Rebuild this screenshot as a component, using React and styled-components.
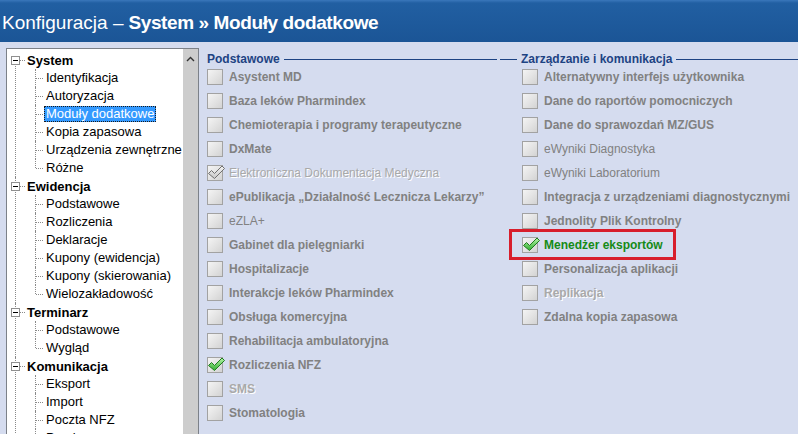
import React from 'react'
import styled, { createGlobalStyle, css } from 'styled-components'

const GlobalStyle = createGlobalStyle`
  html, body {
    margin: 0;
    padding: 0;
  }
  body {
    background: #d5dcef;
    font-family: "Liberation Sans", Arial, sans-serif;
    overflow: hidden;
  }
`;

const Window = styled.div`
  width: 798px;
  height: 434px;
  display: flex;
  flex-direction: column;
  overflow: hidden;
  background: #d5dcef;
`;

const TitleBar = styled.div`
  height: 42px;
  flex: none;
  box-sizing: border-box;
  display: flex;
  align-items: center;
  padding: 3px 0 0 2px;
  background: linear-gradient(#3a77bb 0, #215fa2 3px, #1b5596 100%);
  color: #fff;
  font-size: 19px;
  white-space: nowrap;
`;

const TitleStrong = styled.b`
  letter-spacing: -0.4px;
  margin-left: 5px;
`;

const Body = styled.div`
  flex: 1;
  min-height: 0;
  display: flex;
`;

/* ---------- tree ---------- */

const TreePanel = styled.div`
  flex: none;
  margin: 6px 0 0 6px;
  width: 193px;
  box-sizing: border-box;
  border: 1px solid #7c8189;
  border-bottom: none;
  background: #fff;
  display: flex;
`;

const TreeList = styled.div`
  flex: 1;
  min-width: 0;
  padding-top: 2px;
  overflow: hidden;
`;

const Node = styled.div`
  position: relative;

  &::before {
    content: '';
    position: absolute;
    left: 8px;
    top: ${p => (p.$first ? '13px' : '0')};
    bottom: 0;
    border-left: 1px dotted #8a8a8a;
  }
`;

const HeaderRow = styled.div`
  height: 18px;
  display: flex;
  align-items: center;
  padding-left: 4px;
`;

const ExpandBox = styled.span`
  position: relative;
  z-index: 1;
  width: 9px;
  height: 9px;
  box-sizing: border-box;
  border: 1px solid #8f8f8f;
  background: #fff;

  &::after {
    content: '';
    position: absolute;
    left: 1px;
    top: 3px;
    width: 5px;
    height: 1px;
    background: #000;
  }
`;

const Connector = styled.span`
  width: 5px;
  margin-right: 2px;
  border-top: 1px dotted #8a8a8a;
`;

const HeaderLabel = styled.span`
  font-weight: bold;
  font-size: 13px;
  color: #000;
  white-space: nowrap;
`;

const ChildRow = styled.div`
  position: relative;
  height: 18px;
  display: flex;
  align-items: center;
  padding-left: 37px;

  &::before {
    content: '';
    position: absolute;
    left: 28px;
    top: 0;
    height: ${p => (p.$last ? '9px' : '18px')};
    border-left: 1px dotted #8a8a8a;
  }

  &::after {
    content: '';
    position: absolute;
    left: 29px;
    top: 9px;
    width: 7px;
    border-top: 1px dotted #8a8a8a;
  }
`;

const ChildLabel = styled.span`
  font-size: 13px;
  line-height: 16px;
  padding: 0 2px;
  color: #000;
  white-space: nowrap;
  ${p => p.$selected && css`
    background: #3399ff;
    color: #fff;
    outline: 1px dotted #1a1a1a;
    outline-offset: -1px;
  `}
`;

const Scrollbar = styled.div`
  width: 15px;
  flex: none;
  background: #cdcdcd;
  display: flex;
  flex-direction: column;
  align-items: center;
  padding-top: 7px;
`;

/* ---------- modules ---------- */

const Content = styled.div`
  flex: 1;
  display: flex;
  padding-top: 11px;
`;

const Group = styled.div`
  display: flex;
  flex-direction: column;
  box-sizing: border-box;
  width: ${p => p.$width || 'auto'};
  flex: ${p => (p.$width ? 'none' : '1')};
  padding-left: ${p => p.$pad || 0}px;
  padding-right: ${p => p.$padRight || 0}px;
`;

const Legend = styled.div`
  height: 12px;
  display: flex;
  align-items: center;
  gap: 4px;
  margin-left: ${p => (p.$lead ? -22 : 0)}px;
  font-size: 12px;
  font-weight: bold;
  color: #1d4383;
  white-space: nowrap;
`;

const LegendLine = styled.span`
  height: 1px;
  background: #1d4383;
  flex: ${p => (p.$lead ? 'none' : '1')};
  width: ${p => (p.$lead ? '17px' : 'auto')};
`;

const Row = styled.div`
  position: relative;
  height: 24px;
  width: fit-content;
  display: flex;
  align-items: center;
  gap: 6px;

  ${p => p.$highlight && css`
    &::after {
      content: '';
      position: absolute;
      left: -13px;
      right: -13px;
      top: -4px;
      bottom: -3px;
      border: 3px solid #d81e2c;
    }
  `}
`;

const Box = styled.span`
  position: relative;
  width: 16px;
  height: 16px;
  flex: none;
  box-sizing: border-box;
  border: 1px solid #a2a2a2;
  background: linear-gradient(135deg, #f4f4f4 0%, #e4e4e4 50%, #d3d3d3 100%);

  svg {
    position: absolute;
    left: -2px;
    top: -2px;
  }
`;

const Label = styled.span`
  font-size: 12px;
  font-weight: ${p => (p.$light ? 'normal' : 'bold')};
  white-space: nowrap;
  color: #818181;
  ${p => p.$disabled && css`
    color: #a9a9a9;
    text-shadow: 1px 1px 0 #fff;
  `}
  ${p => p.$active && css`
    color: #168a16;
  `}
`;

function CheckMark({ grey }) {
  const id = grey ? 'chkGrey' : 'chkGreen';
  return (
    <svg width="20" height="18" viewBox="0 0 20 18">
      <defs>
        <linearGradient id={id} x1="0" y1="0" x2="0" y2="1">
          <stop offset="0" stopColor={grey ? '#f2f2f2' : '#b6f5a8'} />
          <stop offset="1" stopColor={grey ? '#c8c8c8' : '#2fae2f'} />
        </linearGradient>
      </defs>
      <path
        d="M2.5 9.5 L5.5 6.5 L8.5 9.5 L16 2 L18.5 4.5 L8.5 14.5 Z"
        fill={`url(#${id})`}
        stroke={grey ? '#6f6f6f' : '#1f7a1f'}
        strokeWidth="1"
        strokeLinejoin="round"
      />
    </svg>
  );
}

function ModuleRow({ item }) {
  return (
    <Row $highlight={item.highlight}>
      <Box>{item.checked && <CheckMark grey={item.disabled} />}</Box>
      <Label $light={item.light} $disabled={item.disabled} $active={item.highlight}>
        {item.label}
      </Label>
    </Row>
  );
}

const tree = [
  { label: 'System', children: ['Identyfikacja', 'Autoryzacja', 'Moduły dodatkowe', 'Kopia zapasowa', 'Urządzenia zewnętrzne', 'Różne'] },
  { label: 'Ewidencja', children: ['Podstawowe', 'Rozliczenia', 'Deklaracje', 'Kupony (ewidencja)', 'Kupony (skierowania)', 'Wielozakładowość'] },
  { label: 'Terminarz', children: ['Podstawowe', 'Wygląd'] },
  { label: 'Komunikacja', children: ['Eksport', 'Import', 'Poczta NFZ', 'Przelewy'] },
];

const basic = [
  { label: 'Asystent MD' },
  { label: 'Baza leków Pharmindex' },
  { label: 'Chemioterapia i programy terapeutyczne' },
  { label: 'DxMate' },
  { label: 'Elektroniczna Dokumentacja Medyczna', disabled: true, checked: true, light: true },
  { label: 'ePublikacja „Działalność Lecznicza Lekarzy”' },
  { label: 'eZLA+', light: true },
  { label: 'Gabinet dla pielęgniarki' },
  { label: 'Hospitalizacje' },
  { label: 'Interakcje leków Pharmindex' },
  { label: 'Obsługa komercyjna' },
  { label: 'Rehabilitacja ambulatoryjna' },
  { label: 'Rozliczenia NFZ', checked: true },
  { label: 'SMS', disabled: true },
  { label: 'Stomatologia' },
];

const management = [
  { label: 'Alternatywny interfejs użytkownika' },
  { label: 'Dane do raportów pomocniczych' },
  { label: 'Dane do sprawozdań MZ/GUS' },
  { label: 'eWyniki Diagnostyka', light: true },
  { label: 'eWyniki Laboratorium', light: true },
  { label: 'Integracja z urządzeniami diagnostycznymi' },
  { label: 'Jednolity Plik Kontrolny' },
  { label: 'Menedżer eksportów', checked: true, highlight: true },
  { label: 'Personalizacja aplikacji' },
  { label: 'Replikacja', disabled: true },
  { label: 'Zdalna kopia zapasowa' },
];

export default function App() {
  return (
    <>
      <GlobalStyle />
      <Window>
        <TitleBar>
          Konfiguracja –<TitleStrong>System » Moduły dodatkowe</TitleStrong>
        </TitleBar>
        <Body>
          <TreePanel>
            <TreeList>
              {tree.map((node, i) => (
                <Node key={node.label} $first={i === 0}>
                  <HeaderRow>
                    <ExpandBox />
                    <Connector />
                    <HeaderLabel>{node.label}</HeaderLabel>
                  </HeaderRow>
                  {node.children.map((child, j) => (
                    <ChildRow key={child + j} $last={j === node.children.length - 1}>
                      <ChildLabel $selected={i === 0 && j === 2}>{child}</ChildLabel>
                    </ChildRow>
                  ))}
                </Node>
              ))}
            </TreeList>
            <Scrollbar>
              <svg width="9" height="6" viewBox="0 0 9 6">
                <path d="M1 5 L4.5 1.5 L8 5" fill="none" stroke="#333" strokeWidth="1.4" />
              </svg>
            </Scrollbar>
          </TreePanel>
          <Content>
            <Group $width="301px" $pad={8} $padRight={3}>
              <Legend>
                Podstawowe
                <LegendLine />
              </Legend>
              {basic.map(item => <ModuleRow key={item.label} item={item} />)}
            </Group>
            <Group $pad={22}>
              <Legend $lead>
                <LegendLine $lead />
                Zarządzanie i komunikacja
                <LegendLine />
              </Legend>
              {management.map(item => <ModuleRow key={item.label} item={item} />)}
            </Group>
          </Content>
        </Body>
      </Window>
    </>
  );
}
